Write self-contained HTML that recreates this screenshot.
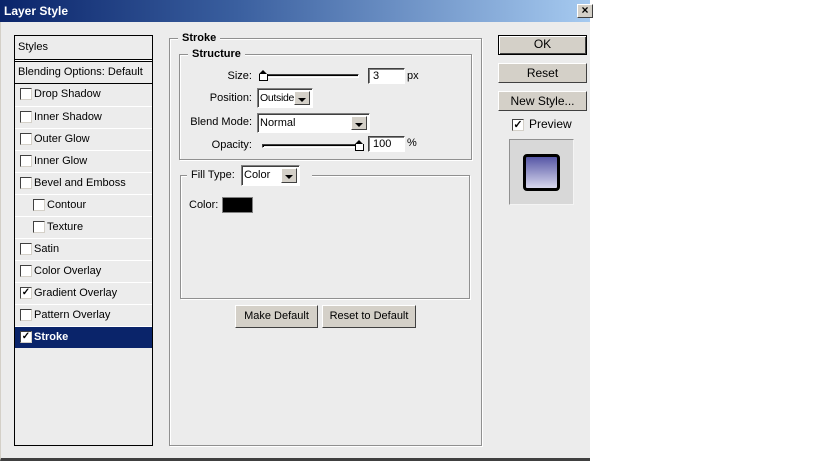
<!DOCTYPE html>
<html><head><meta charset="utf-8"><style>
*{margin:0;padding:0;box-sizing:border-box}
body{width:816px;height:461px;background:#fff;font-family:"Liberation Sans",sans-serif;font-size:11px;color:#000;position:relative;overflow:hidden}
.a{position:absolute}
.dlg{left:0;top:0;width:590px;height:461px;background:#ececec;border-left:1px solid #d4d0c8;border-bottom:3px solid #404040}
.title{left:0;top:0;width:590px;height:22px;background:linear-gradient(to right,#0a246a,#3a5f9f 40%,#a6caf0);color:#fff;font-weight:bold;font-size:12px;padding:4px 0 0 4px}
.close{left:577px;top:4px;width:16px;height:14px;background:#d4d0c8;border:1px solid;border-color:#fff #404040 #404040 #fff;font-weight:bold;font-size:12px;line-height:11px;text-align:center;color:#000}
.list{left:14px;top:35px;width:139px;height:411px;border:1px solid #000;background:#ececec}
.row{position:absolute;left:0;width:137px;height:22px;border-top:1px solid #fff;line-height:21px;padding-left:19px}
.cb{position:absolute;left:5px;top:4px;width:12px;height:12px;background:#fff;border:1px solid;border-color:#404040 #d4d0c8 #d4d0c8 #404040;font-size:10px;line-height:10px;text-align:center;color:#000;font-weight:bold}
.sel{background:#0a246a;color:#fff;font-weight:bold}
.grp{border:1px solid #909090;box-shadow:1px 1px 0 #fff, inset 1px 1px 0 #fff}
.leg{position:absolute;background:#ececec;font-weight:bold;padding:0 4px;top:-7px;line-height:12px}
.lbl{position:absolute;text-align:right;width:80px}
.inp{position:absolute;background:#fff;border:1px solid;border-color:#404040 #fff #fff #404040;box-shadow:inset 1px 1px 0 #808080;padding:2px 4px;line-height:11px}
.sel2{position:absolute;background:#fff;border:1px solid;border-color:#808080 #fff #fff #808080;box-shadow:inset 1px 1px 0 #404040;padding:3px 2px;line-height:12px;white-space:nowrap;overflow:hidden}
.dd{position:absolute;right:2px;top:2px;bottom:2px;width:16px;background:#d4d0c8;border:1px solid;border-color:#fff #404040 #404040 #fff}
.dd:after{content:"";position:absolute;left:3px;top:6px;border:4px solid transparent;border-top:4px solid #000;border-bottom:0}
.track{position:absolute;height:4px;border:1px solid;border-color:#404040 #fff #fff #404040;background:#ececec;box-shadow:inset 1px 1px 0 #000}
.thumb{position:absolute;width:9px;height:7px;background:#fff;border:1px solid #000;border-top:none}
.thumb:before{content:"";position:absolute;left:-1px;top:-4px;border:4px solid transparent;border-bottom:4px solid #000;border-top:0;}
.btn{position:absolute;background:#d4d0c8;border:1px solid;border-color:#fff #404040 #404040 #fff;text-align:center;font-size:12px}
</style></head><body>
<div class="a dlg"></div>
<div class="a title">Layer Style</div>
<div class="a close">×</div>

<div class="a list">
 <div class="row" style="top:-1px;height:25px;border:none;padding-left:3px;line-height:24px">Styles</div>
 <div class="a" style="left:0;top:23px;width:137px;height:3px;border-top:1px solid #000;border-bottom:1px solid #000;background:#fff"></div>
 <div class="row" style="top:26px;border:none;padding-left:3px">Blending Options: Default</div>
 <div class="a" style="left:0;top:47px;width:137px;height:1px;background:#000"></div>
 <div class="row" style="top:48px;border:none"><span class="cb"></span>Drop Shadow</div>
 <div class="row" style="top:70px"><span class="cb"></span>Inner Shadow</div>
 <div class="row" style="top:92px"><span class="cb"></span>Outer Glow</div>
 <div class="row" style="top:114px"><span class="cb"></span>Inner Glow</div>
 <div class="row" style="top:136px"><span class="cb"></span>Bevel and Emboss</div>
 <div class="row" style="top:158px;padding-left:32px"><span class="cb" style="left:18px"></span>Contour</div>
 <div class="row" style="top:180px;padding-left:32px"><span class="cb" style="left:18px"></span>Texture</div>
 <div class="row" style="top:202px"><span class="cb"></span>Satin</div>
 <div class="row" style="top:224px"><span class="cb"></span>Color Overlay</div>
 <div class="row" style="top:246px"><span class="cb">✓</span>Gradient Overlay</div>
 <div class="row" style="top:268px"><span class="cb"></span>Pattern Overlay</div>
 <div class="row sel" style="top:290px;border-top:1px solid #fff"><span class="cb">✓</span>Stroke</div>
</div>

<div class="a grp" style="left:169px;top:38px;width:313px;height:408px"><span class="leg" style="left:8px">Stroke</span></div>
<div class="a grp" style="left:179px;top:54px;width:293px;height:106px"><span class="leg" style="left:8px">Structure</span></div>

<div class="lbl" style="left:172px;top:70px">Size:</div>
<div class="track" style="left:262px;top:74px;width:97px"></div>
<div class="thumb" style="left:259px;top:74px"></div>
<div class="inp" style="left:368px;top:68px;width:37px;height:16px">3</div>
<div class="a" style="left:407px;top:70px">px</div>

<div class="lbl" style="left:172px;top:92px">Position:</div>
<div class="sel2" style="left:257px;top:88px;width:56px;height:20px;letter-spacing:-0.3px;font-size:10.5px">Outside<span class="dd"></span></div>

<div class="lbl" style="left:172px;top:116px">Blend Mode:</div>
<div class="sel2" style="left:257px;top:113px;width:113px;height:20px">Normal<span class="dd"></span></div>

<div class="lbl" style="left:172px;top:139px">Opacity:</div>
<div class="track" style="left:262px;top:144px;width:100px"></div>
<div class="thumb" style="left:355px;top:144px"></div>
<div class="inp" style="left:368px;top:136px;width:37px;height:16px">100</div>
<div class="a" style="left:407px;top:137px">%</div>

<div class="a grp" style="left:180px;top:175px;width:290px;height:124px"></div>
<div class="a" style="left:187px;top:165px;width:54px;height:20px;background:#ececec;padding:4px 0 0 4px">Fill Type:</div>
<div class="a" style="left:300px;top:170px;width:12px;height:10px;background:#ececec"></div>
<div class="sel2" style="left:241px;top:165px;width:59px;height:21px">Color<span class="dd"></span></div>
<div class="a" style="left:189px;top:199px">Color:</div>
<div class="a" style="left:222px;top:197px;width:31px;height:16px;background:#000;border:1px solid #808080"></div>

<div class="btn" style="left:235px;top:305px;width:83px;height:23px;line-height:20px;font-size:11px">Make Default</div>
<div class="btn" style="left:322px;top:305px;width:94px;height:23px;line-height:20px;font-size:11px">Reset to Default</div>

<div class="btn" style="left:498px;top:35px;width:89px;height:20px;line-height:17px;border:1px solid #000;box-shadow:inset 1px 1px 0 #fff,inset -1px -1px 0 #404040">OK</div>
<div class="btn" style="left:498px;top:63px;width:89px;height:20px;line-height:18px">Reset</div>
<div class="btn" style="left:498px;top:91px;width:89px;height:20px;line-height:18px">New Style...</div>
<div class="a" style="left:512px;top:119px;width:12px;height:12px;background:#fff;border:1px solid;border-color:#404040 #d4d0c8 #d4d0c8 #404040;font-size:11px;line-height:10px;text-align:center;font-weight:bold">✓</div>
<div class="a" style="left:529px;top:117px;font-size:12px">Preview</div>
<div class="a" style="left:509px;top:139px;width:65px;height:66px;background:#d8d8d8;border:1px solid;border-color:#909090 #f4f4f4 #f4f4f4 #909090"></div>
<div class="a" style="left:523px;top:154px;width:37px;height:37px;border:3px solid #000;border-radius:4px;background:linear-gradient(#5656a6,#d8d8ee)"></div>
</body></html>
